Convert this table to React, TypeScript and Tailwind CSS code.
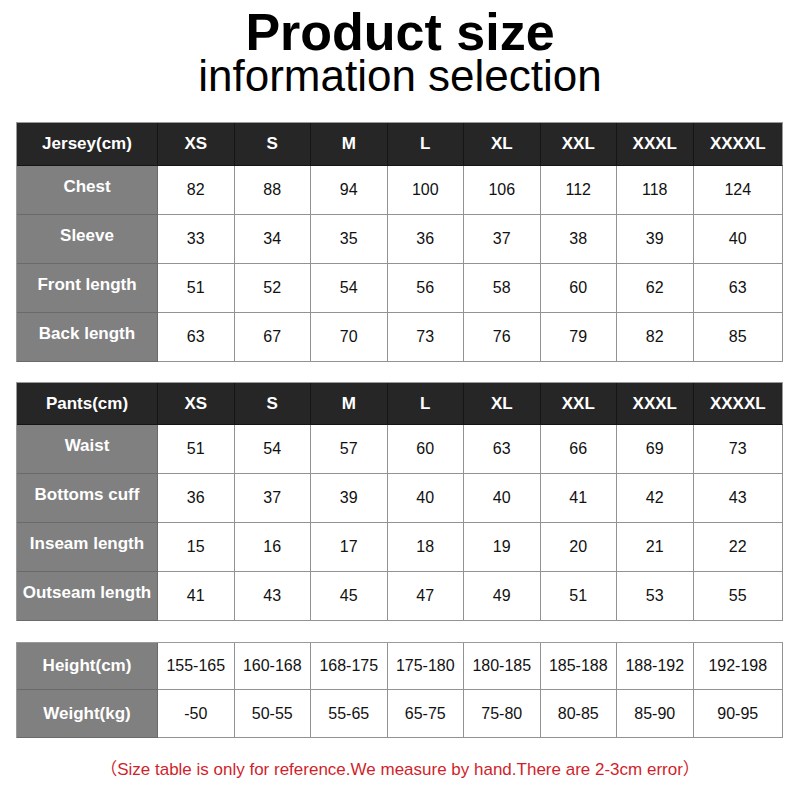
const sizes = ['XS', 'S', 'M', 'L', 'XL', 'XXL', 'XXXL', 'XXXXL'];

type Row = { label: string; values: string[] };

const jersey: Row[] = [
  { label: 'Chest', values: ['82', '88', '94', '100', '106', '112', '118', '124'] },
  { label: 'Sleeve', values: ['33', '34', '35', '36', '37', '38', '39', '40'] },
  { label: 'Front length', values: ['51', '52', '54', '56', '58', '60', '62', '63'] },
  { label: 'Back length', values: ['63', '67', '70', '73', '76', '79', '82', '85'] },
];

const pants: Row[] = [
  { label: 'Waist', values: ['51', '54', '57', '60', '63', '66', '69', '73'] },
  { label: 'Bottoms cuff', values: ['36', '37', '39', '40', '40', '41', '42', '43'] },
  { label: 'Inseam length', values: ['15', '16', '17', '18', '19', '20', '21', '22'] },
  { label: 'Outseam length', values: ['41', '43', '45', '47', '49', '51', '53', '55'] },
];

const body: Row[] = [
  { label: 'Height(cm)', values: ['155-165', '160-168', '168-175', '175-180', '180-185', '185-188', '188-192', '192-198'] },
  { label: 'Weight(kg)', values: ['-50', '50-55', '55-65', '65-75', '75-80', '80-85', '85-90', '90-95'] },
];

function DataRow({ row, height, center }: { row: Row; height: string; center?: boolean }) {
  return (
    <>
      <div
        className={`${height} flex items-center justify-center bg-[#808080] border-r border-b border-[#6a6a6a] text-[17px] font-bold text-white ${center ? '' : 'pb-[6px]'}`}
      >
        {row.label}
      </div>
      {row.values.map((v, i) => (
        <div
          key={i}
          className={`${height} flex items-center justify-center bg-white border-r border-b border-[#929292] text-[16px] text-[#111]`}
        >
          {v}
        </div>
      ))}
    </>
  );
}

function SizeTable({ title, rows, headerHeight }: { title: string; rows: Row[]; headerHeight: string }) {
  return (
    <div className="ml-[16px] w-[767px] grid grid-cols-[141px_repeat(7,76.5px)_1fr] border-t border-l border-[#9a9a9a]">
      <div className={`${headerHeight} flex items-center justify-center bg-[#262626] border-r border-b border-[#151515] text-[17px] font-bold text-white`}>
        {title}
      </div>
      {sizes.map((s, i) => (
        <div
          key={s}
          className={`${headerHeight} flex items-center justify-center bg-[#262626] border-b border-r ${i === sizes.length - 1 ? 'border-r-[#9a9a9a]' : 'border-r-[#151515]'} border-b-[#151515] text-[17px] font-bold text-white`}
        >
          {s}
        </div>
      ))}
      {rows.map((r) => (
        <DataRow key={r.label} row={r} height="h-[49px]" />
      ))}
    </div>
  );
}

export default function App() {
  return (
    <div className="w-[800px] h-[800px] bg-white font-['Liberation_Sans','Noto_Sans_CJK_SC',Arial,sans-serif] overflow-hidden">
      <div className="flex flex-col items-center">
        <h1 className="mt-[8px] text-[52px] leading-[48px] font-bold text-black">Product size</h1>
        <p className="mt-[1px] text-[44px] leading-[38px] text-black">information selection</p>
      </div>

      <div className="mt-[27px]">
        <SizeTable title="Jersey(cm)" rows={jersey} headerHeight="h-[43px]" />
      </div>

      <div className="mt-[20px]">
        <SizeTable title="Pants(cm)" rows={pants} headerHeight="h-[42px]" />
      </div>

      <div className="mt-[21px] ml-[16px] w-[767px] grid grid-cols-[141px_repeat(7,76.5px)_1fr] border-t border-l border-[#9a9a9a]">
        <DataRow row={body[0]} height="h-[47px]" center />
        <DataRow row={body[1]} height="h-[48px]" center />
      </div>

      <p className="mt-[22px] text-center text-[17px] leading-[20px] text-[#d01f2c]">
        （Size table is only for reference.We measure by hand.There are 2-3cm error）
      </p>
    </div>
  );
}
